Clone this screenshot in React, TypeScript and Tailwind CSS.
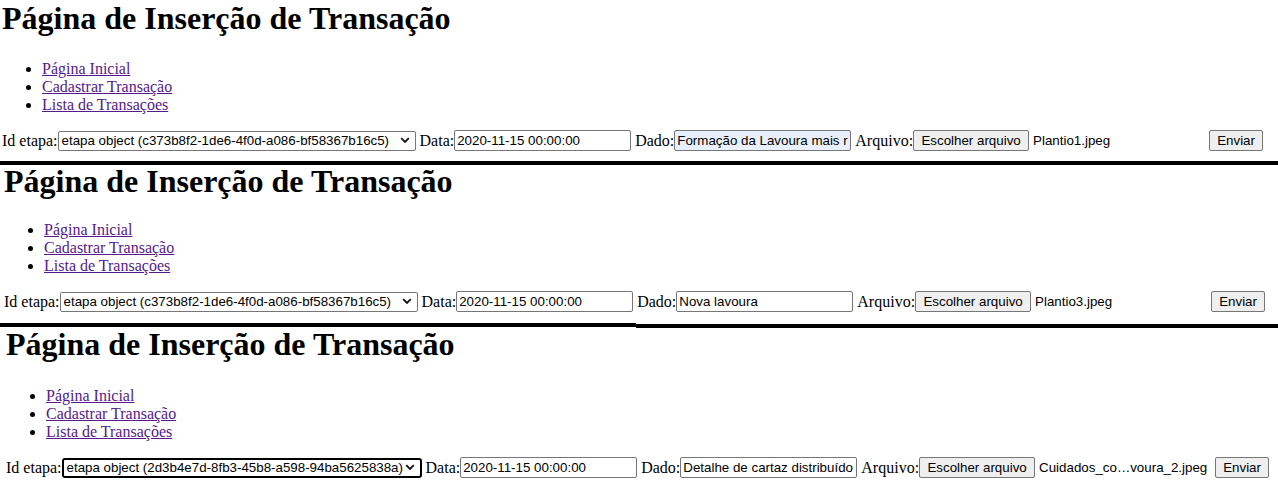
import React from "react";

type Shot = {
  left: string;
  top: string;
  headGap: string;
  etapa: string;
  dado: string;
  autofill?: boolean;
  file: string;
  focused?: boolean;
};

const SHOTS: Shot[] = [
  {
    left: "pl-[2px]",
    top: "mt-0",
    headGap: "mb-[23px]",
    etapa: "etapa object (c373b8f2-1de6-4f0d-a086-bf58367b16c5)",
    dado: "Formação da Lavoura mais resistente",
    autofill: true,
    file: "Plantio1.jpeg",
  },
  {
    left: "pl-[4px]",
    top: "-mt-[2px]",
    headGap: "mb-[21px]",
    etapa: "etapa object (c373b8f2-1de6-4f0d-a086-bf58367b16c5)",
    dado: "Nova lavoura",
    file: "Plantio3.jpeg",
  },
  {
    left: "pl-[6px]",
    top: "-mt-[2px]",
    headGap: "mb-[24px]",
    etapa: "etapa object (2d3b4e7d-8fb3-45b8-a598-94ba5625838a)",
    dado: "Detalhe de cartaz distribuído",
    file: "Cuidados_co…voura_2.jpeg",
    focused: true,
  },
];

const LINKS = ["Página Inicial", "Cadastrar Transação", "Lista de Transações"];

const SANS = { fontFamily: '"Liberation Sans", Arial, sans-serif' };

const Chevron = () => (
  <svg width="10" height="7" viewBox="0 0 10 7" className="shrink-0">
    <path d="M1.2 1.2 5 5 8.8 1.2" fill="none" stroke="#111" strokeWidth="1.8" />
  </svg>
);

const TextBox = ({ value, autofill }: { value: string; autofill?: boolean }) => (
  <input
    readOnly
    value={value}
    className={`w-[177px] h-[21px] px-[2px] border border-[#767676] rounded-[2px] text-[13.33px] text-black outline-none ${
      autofill ? "bg-[#e8f0fe]" : "bg-white"
    }`}
    style={SANS}
  />
);

const Panel = ({ shot }: { shot: Shot }) => (
  <div className={`${shot.left} ${shot.top}`}>
    <h1 className={`text-[32px] font-bold leading-[normal] ${shot.headGap}`}>
      Página de Inserção de Transação
    </h1>
    <ul className="list-disc pl-10 mb-4 leading-[normal]">
      {LINKS.map((l) => (
        <li key={l}>
          <a href="#" className="text-[#551a8b] underline">
            {l}
          </a>
        </li>
      ))}
    </ul>
    <form className="flex items-center h-[21px] text-[16px] whitespace-nowrap">
      <label>Id etapa:</label>
      <div
        className={`h-[20px] flex items-center justify-between pl-[3px] pr-[5px] text-[13.33px] bg-white ${
          shot.focused
            ? "w-[360px] border-2 border-black rounded-[3px]"
            : "w-[358px] border border-[#767676] rounded-[2px]"
        }`}
        style={SANS}
      >
        <span>{shot.etapa}</span>
        <Chevron />
      </div>
      <label className="ml-1">Data:</label>
      <TextBox value="2020-11-15 00:00:00" />
      <label className="ml-1">Dado:</label>
      <TextBox value={shot.dado} autofill={shot.autofill} />
      <label className="ml-1">Arquivo:</label>
      <span className="w-[292px] flex items-center text-[13.33px]" style={SANS}>
        <span className="h-[21px] w-[116px] justify-center flex items-center border border-[#767676] rounded-[2px] bg-[#efefef] mr-1">
          Escolher arquivo
        </span>
        <span>{shot.file}</span>
      </span>
      <span
        className="ml-1 h-[21px] w-[54px] justify-center flex items-center border border-[#767676] rounded-[2px] bg-[#efefef] text-[13.33px]"
        style={SANS}
      >
        Enviar
      </span>
    </form>
  </div>
);

export default function App() {
  return (
    <div
      className="w-[1278px] h-[486px] overflow-hidden bg-white text-black"
      style={{ fontFamily: '"Liberation Serif", "Times New Roman", serif' }}
    >
      <Panel shot={SHOTS[0]} />
      <div className="h-1 bg-black mt-[10px]" />
      <Panel shot={SHOTS[1]} />
      <div className="flex mt-[11px]">
        <div className="w-[636px] h-1 bg-black" />
        <div className="flex-1 h-1 mt-px bg-black" />
      </div>
      <Panel shot={SHOTS[2]} />
    </div>
  );
}
